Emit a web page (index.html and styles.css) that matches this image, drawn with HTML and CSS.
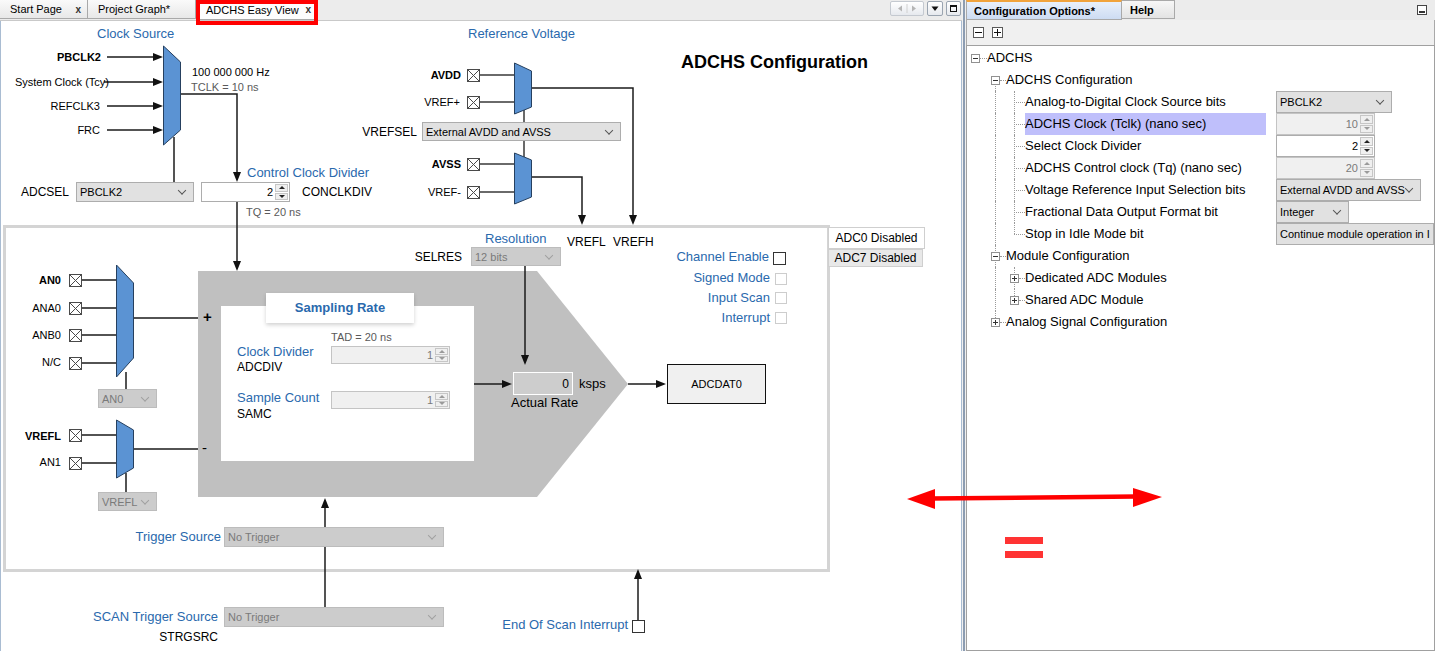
FILE: index.html
```html
<!DOCTYPE html>
<html>
<head>
<meta charset="utf-8">
<title>ADCHS Easy View</title>
<link rel="stylesheet" href="styles.css">
</head>
<body>
<div class="app">
  <section class="editor">
    <div class="tabbar">
      <div class="tab t1"><span>Start Page</span><span class="close">x</span></div>
      <div class="tab t2"><span>Project Graph*</span></div>
      <div class="tab t3 active"><span>ADCHS Easy View</span><span class="close">x</span></div>
      <div class="fill"></div>
      <div class="navs">
        <span class="nbtn pair">
          <svg width="32" height="13" viewBox="0 0 32 13"><path d="M11 3.5L7 6.5L11 9.5Z" fill="#b5b5b5"/><path d="M16 2V11" stroke="#d0d0d0"/><path d="M21 3.5L25 6.5L21 9.5Z" fill="#b5b5b5"/></svg>
        </span>
        <span class="nbtn">
          <svg width="14" height="13" viewBox="0 0 14 13"><path d="M3.5 4.5H10.5L7 9Z" fill="#111"/></svg>
        </span>
        <span class="nbtn">
          <svg width="13" height="13" viewBox="0 0 13 13"><rect x="3.5" y="3.5" width="6" height="6" fill="none" stroke="#111"/><path d="M3.5 4.5H9.5" stroke="#111"/></svg>
        </span>
      </div>
    </div>
    <div class="canvas">
      <svg class="wires" width="962" height="630" viewBox="0 21 962 630">
        <defs>
          <symbol id="xb" viewBox="0 0 13 13">
            <rect x="0.5" y="0.5" width="12" height="12" fill="#fff" stroke="#4a4a4a"/>
            <path d="M1 1L12 12M12 1L1 12" stroke="#4a4a4a" stroke-width="1"/>
          </symbol>
        </defs>
        <rect x="4.5" y="226.5" width="824" height="344" fill="none" stroke="#d4d4d4" stroke-width="3"/>
        <polygon points="198,271 537,271 628,384 537,497 198,497" fill="#c0c0c0"/>
        <rect x="221" y="306" width="253" height="155" fill="#fff"/>

        <g fill="none" stroke="#1b1b1b" stroke-width="1.5">
          <path d="M107 57H155M104 82H155M107 106H155M107 130H155"/>
          <path d="M180 94H237V174"/>
          <path d="M174 137V182"/>
          <path d="M237 202V263"/>
          <path d="M479 75H514M479 102H514M479 164H514M479 192H514" stroke="#3a3a3a"/>
          <path d="M531 88H633V217"/>
          <path d="M531 177H582V217"/>
          <path d="M524 110V122M524 141V157" stroke="#3a3a3a"/>
          <path d="M82 280H116M82 308H116M82 335H116M82 363H116M82 435H116M82 463H116"/>
          <path d="M133 318H198M133 449H198"/>
          <path d="M126 372V389M126 473V492"/>
          <path d="M474 384H504"/>
          <path d="M525 266V357"/>
          <path d="M628 384H658"/>
          <path d="M325 607V506"/>
          <path d="M638 620V579"/>
        </g>

        <g fill="#5b93d3" stroke="#26405f" stroke-width="1">
          <polygon points="163.5,46 180.5,62 180.5,130 163.5,145"/>
          <polygon points="514.5,63 531.5,71 531.5,107 514.5,114"/>
          <polygon points="514.5,153 531.5,160 531.5,197 514.5,204"/>
          <polygon points="116.5,265 133.5,283 133.5,358 116.5,377"/>
          <polygon points="116.5,420 133.5,430 133.5,468 116.5,478"/>
        </g>

        <g fill="#111">
          <polygon points="163,57 153,53 153,61"/>
          <polygon points="163,82 153,78 153,86"/>
          <polygon points="163,106 153,102 153,110"/>
          <polygon points="163,130 153,126 153,134"/>
          <polygon points="237,182 233,172 241,172"/>
          <polygon points="237,271 233,261 241,261"/>
          <polygon points="633,225 629,215 637,215"/>
          <polygon points="582,225 578,215 586,215"/>
          <polygon points="525,365 521,355 529,355"/>
          <polygon points="512,384 502,380 502,388"/>
          <polygon points="666,384 656,380 656,388"/>
          <polygon points="325,498 321,508 329,508"/>
          <polygon points="638,569 634,579 642,579"/>
        </g>

        <use href="#xb" x="467" y="69" width="13" height="13"/>
        <use href="#xb" x="467" y="96" width="13" height="13"/>
        <use href="#xb" x="467" y="158" width="13" height="13"/>
        <use href="#xb" x="467" y="186" width="13" height="13"/>
        <use href="#xb" x="69" y="274" width="13" height="13"/>
        <use href="#xb" x="69" y="302" width="13" height="13"/>
        <use href="#xb" x="69" y="329" width="13" height="13"/>
        <use href="#xb" x="69" y="357" width="13" height="13"/>
        <use href="#xb" x="69" y="429" width="13" height="13"/>
        <use href="#xb" x="69" y="457" width="13" height="13"/>
      </svg>

      <div class="n blue lbl-clksrc">Clock Source</div>
      <div class="n s11 b lbl-pbclk2">PBCLK2</div>
      <div class="n s11 lbl-sysclk">System Clock (Tcy)</div>
      <div class="n s11 lbl-refclk3">REFCLK3</div>
      <div class="n s11 lbl-frc">FRC</div>
      <div class="n s11 lbl-hz">100 000 000 Hz</div>
      <div class="n s11 gray lbl-tclk">TCLK = 10 ns</div>
      <div class="n blue lbl-ccd">Control Clock Divider</div>
      <div class="n s12 lbl-adcsel">ADCSEL</div>
      <div class="n combo cmb-adcsel">PBCLK2</div>
      <div class="n spin spn-conclk"><span class="v">2</span><span class="btns"><i class="up"></i><i class="dn"></i></span></div>
      <div class="n s12 lbl-conclkdiv">CONCLKDIV</div>
      <div class="n s11 gray lbl-tq">TQ = 20 ns</div>

      <div class="n blue lbl-refv">Reference Voltage</div>
      <div class="n s11 b lbl-avdd">AVDD</div>
      <div class="n s11 lbl-vrefp">VREF+</div>
      <div class="n s12 lbl-vrefsel">VREFSEL</div>
      <div class="n combo cmb-vrefsel">External AVDD and AVSS</div>
      <div class="n s11 b lbl-avss">AVSS</div>
      <div class="n s11 lbl-vrefm">VREF-</div>
      <div class="n s12 lbl-vrefl">VREFL</div>
      <div class="n s12 lbl-vrefh">VREFH</div>

      <div class="n title">ADCHS Configuration</div>

      <div class="n modtab on mt0">ADC0 Disabled</div>
      <div class="n modtab mt7">ADC7 Disabled</div>

      <div class="n s11 b lbl-an0">AN0</div>
      <div class="n s11 lbl-ana0">ANA0</div>
      <div class="n s11 lbl-anb0">ANB0</div>
      <div class="n s11 lbl-nc">N/C</div>
      <div class="n combo off cmb-an0">AN0</div>
      <div class="n s11 b lbl-vrefl2">VREFL</div>
      <div class="n s11 lbl-an1">AN1</div>
      <div class="n combo off cmb-vrefl">VREFL</div>
      <div class="n sign lbl-plus">+</div>
      <div class="n sign lbl-minus">-</div>

      <div class="n blue lbl-res">Resolution</div>
      <div class="n s12 lbl-selres">SELRES</div>
      <div class="n combo off cmb-selres">12 bits</div>

      <div class="n samp-tab">Sampling Rate</div>
      <div class="n s11 gray lbl-tad">TAD = 20 ns</div>
      <div class="n blue lbl-cdiv">Clock Divider</div>
      <div class="n s12 lbl-adcdiv">ADCDIV</div>
      <div class="n spin off spn-adcdiv"><span class="v">1</span><span class="btns"><i class="up"></i><i class="dn"></i></span></div>
      <div class="n blue lbl-scount">Sample Count</div>
      <div class="n s12 lbl-samc">SAMC</div>
      <div class="n spin off spn-samc"><span class="v">1</span><span class="btns"><i class="up"></i><i class="dn"></i></span></div>
      <div class="n rate">0</div>
      <div class="n s13 lbl-ksps">ksps</div>
      <div class="n s13 lbl-actual">Actual Rate</div>
      <div class="n adcdat">ADCDAT0</div>

      <div class="n blue lbl-chen">Channel Enable</div>
      <div class="n cb cb-chen"></div>
      <div class="n blue lbl-signed">Signed Mode</div>
      <div class="n cb off cb-signed"></div>
      <div class="n blue lbl-iscan">Input Scan</div>
      <div class="n cb off cb-iscan"></div>
      <div class="n blue lbl-intr">Interrupt</div>
      <div class="n cb off cb-intr"></div>

      <div class="n blue lbl-trig">Trigger Source</div>
      <div class="n combo off cmb-trig">No Trigger</div>
      <div class="n blue lbl-strig">SCAN Trigger Source</div>
      <div class="n combo off cmb-strig">No Trigger</div>
      <div class="n s12 lbl-strgsrc">STRGSRC</div>
      <div class="n blue lbl-eos">End Of Scan Interrupt</div>
      <div class="n cb cb-eos"></div>
    </div>
  </section>

  <div class="splitter"></div>

  <section class="config">
    <div class="ctabbar">
      <div class="ctab active">Configuration Options*</div>
      <div class="ctab help">Help</div>
      <div class="fill"></div>
      <span class="minbtn"></span>
    </div>
    <div class="toolbar">
      <span class="tbtn"></span>
      <span class="tbtn plus"></span>
    </div>
    <div class="tree">
      <div class="row l0"><div class="lab"><i class="exp"></i><i class="hd"></i><span class="txt">ADCHS</span></div></div>
      <div class="row l1"><i class="g g1 lower"></i><div class="lab"><i class="exp"></i><i class="hd"></i><span class="txt">ADCHS Configuration</span></div></div>
      <div class="row l2"><i class="g g1"></i><i class="g g2"></i><div class="lab"><i class="hd"></i><span class="txt">Analog-to-Digital Clock Source bits</span></div><div class="val"><span class="combo w116">PBCLK2</span></div></div>
      <div class="row l2 sel"><i class="g g1"></i><i class="g g2"></i><div class="lab"><i class="hd"></i><span class="txt">ADCHS Clock (Tclk) (nano sec)</span></div><div class="val"><span class="spin off w99"><span class="v">10</span><span class="btns"><i class="up"></i><i class="dn"></i></span></span></div></div>
      <div class="row l2"><i class="g g1"></i><i class="g g2"></i><div class="lab"><i class="hd"></i><span class="txt">Select Clock Divider</span></div><div class="val"><span class="spin w99"><span class="v">2</span><span class="btns"><i class="up"></i><i class="dn"></i></span></span></div></div>
      <div class="row l2"><i class="g g1"></i><i class="g g2"></i><div class="lab"><i class="hd"></i><span class="txt">ADCHS Control clock (Tq) (nano sec)</span></div><div class="val"><span class="spin off w99"><span class="v">20</span><span class="btns"><i class="up"></i><i class="dn"></i></span></span></div></div>
      <div class="row l2"><i class="g g1"></i><i class="g g2"></i><div class="lab"><i class="hd"></i><span class="txt">Voltage Reference Input Selection bits</span></div><div class="val"><span class="combo w145">External AVDD and AVSS</span></div></div>
      <div class="row l2"><i class="g g1"></i><i class="g g2"></i><div class="lab"><i class="hd"></i><span class="txt">Fractional Data Output Format bit</span></div><div class="val"><span class="combo w73">Integer</span></div></div>
      <div class="row l2"><i class="g g1"></i><i class="g g2 upper"></i><div class="lab"><i class="hd"></i><span class="txt">Stop in Idle Mode bit</span></div><div class="val"><span class="combo wide">Continue module operation in I</span></div></div>
      <div class="row l1"><i class="g g1"></i><div class="lab"><i class="exp"></i><i class="hd"></i><span class="txt">Module Configuration</span></div></div>
      <div class="row l2x"><i class="g g1"></i><i class="g g2"></i><div class="lab"><i class="exp plus"></i><i class="hd"></i><span class="txt">Dedicated ADC Modules</span></div></div>
      <div class="row l2x"><i class="g g1"></i><i class="g g2 upper"></i><div class="lab"><i class="exp plus"></i><i class="hd"></i><span class="txt">Shared ADC Module</span></div></div>
      <div class="row l1"><i class="g g1 upper"></i><div class="lab"><i class="exp plus"></i><i class="hd"></i><span class="txt">Analog Signal Configuration</span></div></div>
    </div>
  </section>
</div>

<div class="redbox"></div>
<svg class="annot" width="1435" height="651" viewBox="0 0 1435 651">
  <path d="M930 498.5L1136 496.5" stroke="#ff0000" stroke-width="4.5"/>
  <polygon points="907,499 935,489 935,509" fill="#ff0000"/>
  <polygon points="1162,497 1133,488 1133,507" fill="#ff0000"/>
  <rect x="1005" y="537" width="38" height="7" fill="#ff3333"/>
  <rect x="1005" y="551" width="38" height="7" fill="#ff3333"/>
</svg>
</body>
</html>
```

FILE: styles.css
```css
* { box-sizing: border-box; }
html, body { margin: 0; padding: 0; }
body {
  width: 1435px;
  height: 651px;
  overflow: hidden;
  position: relative;
  background: #f0f0f0;
  color: #000;
  font-family: "Liberation Sans", Arial, sans-serif;
  font-size: 12px;
}
.app { display: flex; height: 651px; }

/* ---------- widgets ---------- */
.combo {
  position: relative;
  display: flex; align-items: center;
  padding-left: 3px;
  font-size: 11px;
  line-height: 14px;
  white-space: nowrap;
  overflow: hidden;
  background: #e1e1e1;
  border: 1px solid #adadad;
  color: #000;
}
.combo::after {
  content: "";
  position: absolute;
  right: 8px; top: 50%;
  width: 5px; height: 5px;
  border-right: 1px solid #555;
  border-bottom: 1px solid #555;
  transform: translateY(-75%) rotate(45deg);
}
.combo.off { background: #cccccc; border-color: #bcbcbc; color: #7a7a7a; }
.combo.off::after { border-color: #a0a0a0; }

.spin {
  display: flex;
  background: #fff;
  border: 1px solid #adadad;
  font-size: 11px;
}
.spin .v { flex: 1; align-self: center; text-align: right; padding-right: 2px; }
.spin .btns { width: 14px; display: flex; flex-direction: column; padding: 1px 1px 1px 0; gap: 1px; }
.spin .btns i {
  flex: 1;
  display: flex; align-items: center; justify-content: center;
  background: #efefef;
  border: 1px solid #c6c6c6;
}
.spin .btns i::before {
  content: "";
  border-left: 3px solid transparent;
  border-right: 3px solid transparent;
}
.spin .btns i.up::before { border-bottom: 3px solid #222; }
.spin .btns i.dn::before { border-top: 3px solid #222; }
.spin.off { background: #f0f0f0; border-color: #c4c4c4; color: #7a7a7a; }
.spin.off .btns i.up::before { border-bottom-color: #9a9a9a; }
.spin.off .btns i.dn::before { border-top-color: #9a9a9a; }

.cb { width: 13px; height: 13px; border: 1px solid #333; background: #fff; }
.cb.off { width: 12px; height: 12px; border-color: #cdcdcd; }

/* ---------- editor (left) ---------- */
.editor { width: 962px; display: flex; flex-direction: column; }
.tabbar {
  height: 21px;
  display: flex;
  align-items: flex-start;
  background: #ececec;
  border-bottom: 1px solid #c9c9c9;
}
.tab {
  height: 19px;
  display: flex;
  align-items: center;
  justify-content: space-between;
  padding: 0 6px 0 10px;
  font-size: 11px;
  border: 1px solid #a9a9a9;
  border-top: none;
  border-left: none;
  background: linear-gradient(#fafafa, #e8e8e8);
}
.tab.t1 { width: 88px; }
.tab.t2 { width: 108px; }
.tab.t3 { width: 122px; background: #fdfdfd; height: 20px; }
.tab .close { font-weight: bold; font-size: 10px; color: #333; }
.fill { flex: 1; }
.navs { display: flex; gap: 3px; padding: 1px 1px 0 0; }
.nbtn {
  display: flex; align-items: center; justify-content: center;
  height: 15px;
  border: 1px solid #9aa4b0;
  border-radius: 2px;
  background: linear-gradient(#ffffff, #e6e9ee);
}
.nbtn.pair { border-color: #c4c9d0; }

.canvas {
  flex: 1;
  position: relative;
  background: #fff;
  overflow: hidden;
  box-shadow: inset 1px 0 #a9bcd2, inset -1px 0 #a9bcd2;
}
.wires { position: absolute; left: 0; top: 0; }

/* diagram nodes (free canvas) */
.canvas > .n { position: absolute; white-space: nowrap; line-height: 14px; }
.blue { color: #2a69ad; font-size: 13px; }
.s11 { font-size: 11px; }
.s12 { font-size: 12px; }
.s13 { font-size: 13px; }
.b { font-weight: bold; }
.gray { color: #5a5a5a; }
.canvas > .sign { font-size: 15px; font-weight: bold; line-height: 14px; }

.canvas > .title { left: 681px; top: 30px; font-size: 18px; font-weight: bold; line-height: 22px; }

.lbl-clksrc { left: 97px; top: 6px; }
.lbl-pbclk2 { right: 861px; top: 29px; }
.lbl-sysclk { right: 853px; top: 54px; }
.lbl-refclk3 { right: 862px; top: 78px; }
.lbl-frc { right: 862px; top: 102px; }
.lbl-hz { left: 192px; top: 44px; }
.lbl-tclk { left: 191px; top: 59px; }
.lbl-ccd { left: 247px; top: 145px; }
.lbl-adcsel { left: 21px; top: 164px; }
.cmb-adcsel { left: 76px; top: 161px; width: 118px; height: 20px; }
.spn-conclk { left: 201px; top: 161px; width: 89px; height: 20px; }
.lbl-conclkdiv { left: 302px; top: 164px; }
.lbl-tq { left: 246px; top: 184px; }

.lbl-refv { left: 468px; top: 6px; }
.lbl-avdd { right: 501px; top: 47px; }
.lbl-vrefp { right: 502px; top: 74px; }
.lbl-vrefsel { right: 545px; top: 104px; }
.cmb-vrefsel { left: 422px; top: 101px; width: 199px; height: 19px; }
.lbl-avss { right: 501px; top: 136px; }
.lbl-vrefm { right: 501px; top: 164px; }
.lbl-vrefl { left: 567px; top: 214px; }
.lbl-vrefh { left: 613px; top: 214px; }

.modtab {
  font-size: 12px;
  display: flex; align-items: center; justify-content: center;
  border: 1px solid #cfcfcf;
  background: #e8e8e8;
}
.modtab.on { background: #fff; }
.mt0 { left: 828px; top: 206px; width: 97px; height: 22px; }
.mt7 { left: 828px; top: 228px; width: 95px; height: 18px; }

.lbl-an0 { right: 901px; top: 252px; }
.lbl-ana0 { right: 901px; top: 280px; }
.lbl-anb0 { right: 901px; top: 307px; }
.lbl-nc { right: 901px; top: 334px; }
.lbl-vrefl2 { right: 901px; top: 408px; }
.lbl-an1 { right: 901px; top: 434px; }
.cmb-an0 { left: 98px; top: 368px; width: 59px; height: 19px; }
.cmb-vrefl { left: 98px; top: 471px; width: 59px; height: 19px; }
.lbl-plus { left: 203px; top: 289px; }
.canvas > .lbl-minus { left: 202px; top: 420px; font-weight: normal; }

.lbl-res { left: 485px; top: 211px; }
.lbl-selres { right: 500px; top: 229px; }
.cmb-selres { left: 471px; top: 226px; width: 90px; height: 19px; }

.samp-tab {
  left: 266px; top: 272px; width: 148px; height: 30px;
  background: #fff;
  box-shadow: 0 2px 4px rgba(0,0,0,0.18);
  color: #2a69ad;
  font-size: 13px;
  font-weight: bold;
  display: flex; align-items: center; justify-content: center;
}
.lbl-tad { left: 331px; top: 309px; }
.lbl-cdiv { left: 237px; top: 324px; }
.lbl-adcdiv { left: 237px; top: 339px; }
.spn-adcdiv { left: 331px; top: 325px; width: 119px; height: 18px; }
.lbl-scount { left: 237px; top: 370px; }
.lbl-samc { left: 237px; top: 386px; }
.spn-samc { left: 331px; top: 370px; width: 119px; height: 18px; }
.rate {
  left: 513px; top: 351px; width: 60px; height: 23px;
  background: #cdcdcd;
  border: 1px solid #fff;
  font-size: 12px;
  display: flex; align-items: center; justify-content: flex-end;
  padding-right: 3px;
}
.lbl-ksps { left: 579px; top: 356px; }
.lbl-actual { left: 511px; top: 375px; }
.adcdat {
  left: 667px; top: 343px; width: 99px; height: 40px;
  background: #f0f0f0;
  border: 1px solid #111;
  font-size: 11px;
  display: flex; align-items: center; justify-content: center;
}

.lbl-chen { right: 193px; top: 229px; }
.cb-chen { left: 773px; top: 231px; }
.lbl-signed { right: 192px; top: 250px; }
.cb-signed { left: 775px; top: 252px; }
.lbl-iscan { right: 192px; top: 270px; }
.cb-iscan { left: 775px; top: 271px; }
.lbl-intr { right: 192px; top: 290px; }
.cb-intr { left: 775px; top: 291px; }

.lbl-trig { right: 741px; top: 509px; }
.cmb-trig { left: 224px; top: 506px; width: 220px; height: 20px; }
.lbl-strig { right: 744px; top: 589px; }
.cmb-strig { left: 224px; top: 586px; width: 220px; height: 20px; }
.lbl-strgsrc { right: 744px; top: 609px; }
.lbl-eos { right: 334px; top: 597px; }
.cb-eos { left: 632px; top: 599px; }

/* ---------- splitter ---------- */
.splitter {
  width: 4px;
  background: linear-gradient(90deg, #f0f0f0 0 1px, #8d9db2 1px 3px, #f0f0f0 3px);
}

/* ---------- config (right) ---------- */
.config { flex: 1; display: flex; flex-direction: column; min-width: 0; }
.ctabbar { height: 20px; display: flex; align-items: flex-start; background: #ececec; }
.ctab {
  height: 19px;
  display: flex; align-items: center;
  padding-left: 7px;
  font-size: 11px;
  font-weight: bold;
  border: 1px solid #a9a9a9;
  border-left: none;
  background: linear-gradient(#f7f7f7, #e3e3e3);
}
.ctab.active {
  width: 156px;
  border-left: 1px solid #a9a9a9;
  border-top: 2px solid #f1a33c;
  background: linear-gradient(#e9f0fb, #cddcf2);
  height: 20px;
}
.ctab.help { width: 53px; padding-left: 8px; }
.minbtn {
  width: 10px; height: 10px;
  margin: 5px 8px 0 0;
  border: 1px solid #444;
  background: #fff;
  position: relative;
}
.minbtn::after {
  content: ""; position: absolute; left: 1px; right: 1px; bottom: 1px; height: 2px; background: #333;
}
.toolbar {
  height: 25px;
  display: flex; align-items: center; gap: 8px;
  padding-left: 6px;
  background: #f0f0f0;
  border-left: 1px solid #a9a9a9;
  border-right: 1px solid #a9a9a9;
}
.tbtn {
  width: 11px; height: 11px;
  border: 1px solid #5a5a5a;
  background: #fff;
  position: relative;
}
.tbtn::before { content: ""; position: absolute; left: 1px; right: 1px; top: 4px; height: 1px; background: #111; }
.tbtn.plus::after { content: ""; position: absolute; top: 1px; bottom: 1px; left: 4px; width: 1px; background: #111; }

.tree {
  flex: 1;
  background: #fff;
  border: 1px solid #a0a0a0;
  padding-top: 1px;
  overflow: hidden;
  font-size: 13px;
}
.row {
  position: relative;
  display: grid;
  grid-template-columns: 299px 1fr;
  column-gap: 10px;
  height: 22px;
}
.lab { display: flex; align-items: center; height: 22px; position: relative; }
.l0 .lab { padding-left: 4px; }
.l1 .lab { padding-left: 24px; }
.l2 .lab { padding-left: 47px; }
.l2x .lab { padding-left: 43px; }
.txt { flex: 1; height: 22px; line-height: 22px; white-space: nowrap; }
.sel .txt { background: #bfbffb; }
.hd { height: 0; border-top: 1px dotted #9a9a9a; width: 6px; flex: none; }
.l0 .hd { width: 7px; }
.l2 .hd { width: 11px; }
.exp {
  width: 9px; height: 9px; flex: none;
  border: 1px solid #919191;
  background: #fff;
  position: relative;
}
.exp::before { content: ""; position: absolute; left: 1px; right: 1px; top: 3px; height: 1px; background: #333; }
.exp.plus::after { content: ""; position: absolute; top: 1px; bottom: 1px; left: 3px; width: 1px; background: #333; }
.g { position: absolute; top: 0; bottom: 0; border-left: 1px dotted #9a9a9a; }
.g1 { left: 28px; }
.g2 { left: 47px; }
.g.lower { top: 11px; }
.g.upper { bottom: 11px; }
.val { display: flex; align-items: stretch; height: 22px; overflow: hidden; }
.val .combo, .val .spin { height: 22px; }
.w116 { width: 116px; }
.w99 { width: 99px; }
.w145 { width: 145px; }
.w73 { width: 73px; }
.wide { flex: 1; min-width: 0; }
.val .combo.wide::after { display: none; }

/* ---------- annotations ---------- */
.redbox {
  position: absolute;
  left: 196px; top: 0;
  width: 122px; height: 25px;
  border: 4px solid #ff0000;
}
.annot { position: absolute; left: 0; top: 0; pointer-events: none; }
```
